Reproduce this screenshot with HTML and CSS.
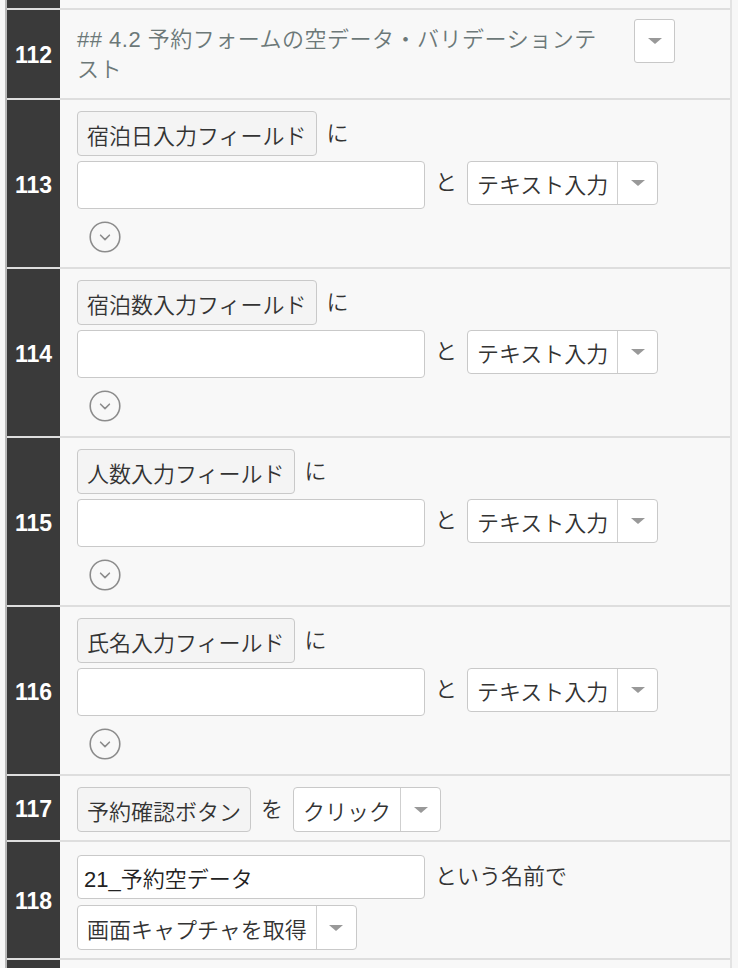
FILE: index.html
```html
<!DOCTYPE html>
<html lang="ja">
<head>
<meta charset="utf-8">
<title>Steps</title>
<link rel="stylesheet" href="styles.css">
</head>
<body>
<div class="page">
  <div class="list">
    <div class="row stub"><div class="num"></div><div class="body"></div></div>

    <div class="row">
      <div class="num">112</div>
      <div class="body title-row">
        <p class="title">## 4.2 予約フォームの空データ・バリデーションテスト</p>
        <span class="sq-select"><span class="caret"></span></span>
      </div>
    </div>

    <div class="row">
      <div class="num">113</div>
      <div class="body step">
        <div class="line"><span class="chip">宿泊日入力フィールド</span><span class="word">に</span></div>
        <div class="line line2"><span class="field"></span><span class="word">と</span><span class="select"><span class="val">テキスト入力</span><span class="arrow"><span class="caret"></span></span></span></div>
        <svg class="toggle" width="32" height="32" viewBox="0 0 32 32"><circle cx="16" cy="16" r="14.8" fill="none" stroke="#8c8c8c" stroke-width="1.6"/><path d="M11.6 14.2 L16 18.6 L20.4 14.2" fill="none" stroke="#8c8c8c" stroke-width="1.6" stroke-linecap="round" stroke-linejoin="round"/></svg>
      </div>
    </div>

    <div class="row">
      <div class="num">114</div>
      <div class="body step">
        <div class="line"><span class="chip">宿泊数入力フィールド</span><span class="word">に</span></div>
        <div class="line line2"><span class="field"></span><span class="word">と</span><span class="select"><span class="val">テキスト入力</span><span class="arrow"><span class="caret"></span></span></span></div>
        <svg class="toggle" width="32" height="32" viewBox="0 0 32 32"><circle cx="16" cy="16" r="14.8" fill="none" stroke="#8c8c8c" stroke-width="1.6"/><path d="M11.6 14.2 L16 18.6 L20.4 14.2" fill="none" stroke="#8c8c8c" stroke-width="1.6" stroke-linecap="round" stroke-linejoin="round"/></svg>
      </div>
    </div>

    <div class="row">
      <div class="num">115</div>
      <div class="body step">
        <div class="line"><span class="chip">人数入力フィールド</span><span class="word">に</span></div>
        <div class="line line2"><span class="field"></span><span class="word">と</span><span class="select"><span class="val">テキスト入力</span><span class="arrow"><span class="caret"></span></span></span></div>
        <svg class="toggle" width="32" height="32" viewBox="0 0 32 32"><circle cx="16" cy="16" r="14.8" fill="none" stroke="#8c8c8c" stroke-width="1.6"/><path d="M11.6 14.2 L16 18.6 L20.4 14.2" fill="none" stroke="#8c8c8c" stroke-width="1.6" stroke-linecap="round" stroke-linejoin="round"/></svg>
      </div>
    </div>

    <div class="row">
      <div class="num">116</div>
      <div class="body step">
        <div class="line"><span class="chip">氏名入力フィールド</span><span class="word">に</span></div>
        <div class="line line2"><span class="field"></span><span class="word">と</span><span class="select"><span class="val">テキスト入力</span><span class="arrow"><span class="caret"></span></span></span></div>
        <svg class="toggle" width="32" height="32" viewBox="0 0 32 32"><circle cx="16" cy="16" r="14.8" fill="none" stroke="#8c8c8c" stroke-width="1.6"/><path d="M11.6 14.2 L16 18.6 L20.4 14.2" fill="none" stroke="#8c8c8c" stroke-width="1.6" stroke-linecap="round" stroke-linejoin="round"/></svg>
      </div>
    </div>

    <div class="row">
      <div class="num">117</div>
      <div class="body short">
        <div class="line"><span class="chip">予約確認ボタン</span><span class="word">を</span><span class="select tall"><span class="val">クリック</span><span class="arrow"><span class="caret"></span></span></span></div>
      </div>
    </div>

    <div class="row">
      <div class="num">118</div>
      <div class="body capture">
        <div class="line"><span class="field slim">21_予約空データ</span><span class="word">という名前で</span></div>
        <div class="line line2b"><span class="select tall"><span class="val">画面キャプチャを取得</span><span class="arrow"><span class="caret"></span></span></span></div>
      </div>
    </div>

    <div class="row next"><div class="num"></div><div class="body"></div></div>
  </div>
</div>
</body>
</html>
```

FILE: styles.css
```css
html, body {
  margin: 0;
  padding: 0;
  background: #f7f7f7;
}

body {
  font-family: "Liberation Sans", "Noto Sans CJK JP", sans-serif;
  font-size: 22px;
  font-weight: 350;
  color: #333;
  overflow: hidden;
}

.page {
  padding-left: 5px;
  width: 727px;
}

.list {
  border-left: 2px solid #b9b9b9;
  border-right: 2px solid #e3e3e3;
  background: #f8f8f8;
}

.row {
  display: grid;
  grid-template-columns: 53px 1fr;
  border-top: 2px solid #dedede;
}

.row.stub {
  border-top: none;
  height: 8px;
}

.row.next {
  height: 20px;
}

.num {
  background: #3a3a3a;
  color: #fff;
  font-weight: bold;
  font-size: 23px;
  display: flex;
  align-items: center;
  justify-content: center;
  padding-top: 3px;
}

.row.stub .num, .row.next .num {
  padding-top: 0;
}

.body {
  background: #f8f8f8;
}

.title-row {
  display: flex;
  align-items: flex-start;
  padding: 9px 0 13px 17px;
}

.title {
  margin: 6px 0 0;
  width: 528px;
  line-height: 30px;
  color: #6c7878;
  letter-spacing: 0.5px;
}

.sq-select {
  margin-left: 29px;
  width: 41px;
  height: 44px;
  box-sizing: border-box;
  border: 1px solid #c8c8c8;
  border-radius: 3px;
  background: #fff;
  display: flex;
  align-items: center;
  justify-content: center;
}

.caret {
  width: 0;
  height: 0;
  border-left: 7px solid transparent;
  border-right: 7px solid transparent;
  border-top: 6px solid #999;
}

.step {
  padding: 11px 17px 14px;
}

.short {
  padding: 11px 17px 8px;
}

.capture {
  padding: 13px 17px 8px;
}

.line {
  display: flex;
  align-items: center;
  gap: 10px;
}

.line2 {
  margin-top: 5px;
  align-items: flex-start;
}

.line2b {
  margin-top: 6px;
}

.chip {
  height: 45px;
  box-sizing: border-box;
  border: 1px solid #c9c9c9;
  border-radius: 4px;
  background: #f4f4f4;
  padding: 0 9px;
  display: flex;
  align-items: center;
  white-space: nowrap;
}

.word {
  line-height: 44px;
  white-space: nowrap;
}

.field {
  width: 348px;
  height: 48px;
  box-sizing: border-box;
  border: 1px solid #c9c9c9;
  border-radius: 4px;
  background: #fff;
  display: flex;
  align-items: center;
  padding: 0 6px;
  color: #222;
}

.field.slim {
  height: 44px;
}

.select {
  display: flex;
  height: 44px;
  box-sizing: border-box;
  border: 1px solid #c9c9c9;
  border-radius: 4px;
  background: #fff;
  white-space: nowrap;
}

.select.tall {
  height: 45px;
}

.select .val {
  display: flex;
  align-items: center;
  padding: 0 9px;
  border-right: 1px solid #cfcfcf;
}

.select .arrow {
  width: 39px;
  display: flex;
  align-items: center;
  justify-content: center;
}

.toggle {
  display: block;
  margin: 12px 0 0 12px;
}
```
